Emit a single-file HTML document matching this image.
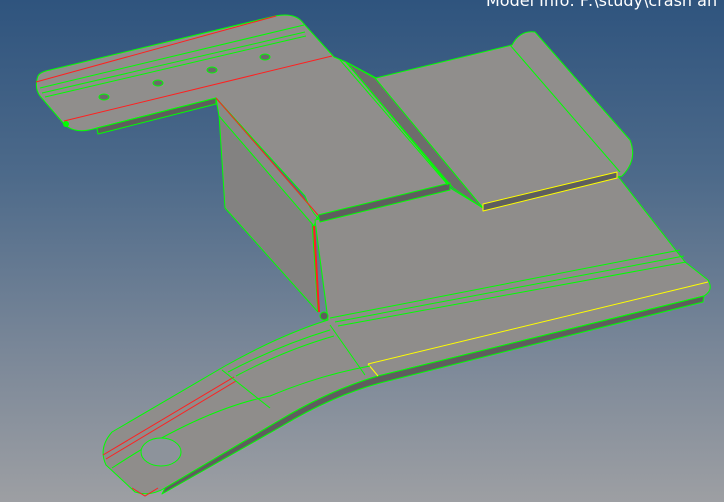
<!DOCTYPE html>
<html><head><meta charset="utf-8"><style>
html,body{margin:0;padding:0;width:724px;height:502px;overflow:hidden}
body{background:linear-gradient(to bottom,#2f547e 0%,#4d6a8a 35%,#7a8798 70%,#9d9fa3 100%)}
svg{position:absolute;left:0;top:0}
.t{position:absolute;left:486px;top:-9px;color:#fff;font:16px "DejaVu Sans","Liberation Sans",sans-serif;white-space:nowrap}
</style></head><body>
<div class="t">Model Info: F:\study\crash an</div>
<svg width="724" height="502" viewBox="0 0 724 502">
<g stroke="#00ff00" stroke-width="1" stroke-linejoin="round">
<!-- left side face of box -->
<polygon points="216,100 219,112 312,222 318,312 225,208 219,114" fill="#838281"/>
<polygon points="216,98 318,215 314,226 219,116" fill="#8a8988"/>
<!-- front face + arm -->
<path d="M315,220 L450,188 L483,208 L617,175 L685,262 L708,280 Q714,290 704,296 L378,376 Q330,390 280,420 L165,488 Q150,497 135,492 L106,465 Q98,448 112,432 L225,366 Q280,335 328,320 Z" fill="#8f8d8b"/>
<!-- lower thickness strips -->
<path d="M704,296 L378,376 Q330,390 280,420 L165,488 L162,494 L282,426 Q332,396 380,383 L703,302 Z" fill="#5e5e5e"/>
<!-- flange + box top -->
<path d="M38,76 Q40,72 50,70 L275,16 Q296,12 304,24 L334,57 L346,62 L450,186 L318,218 Q310,210 305,196 L216,98 L97,128 Q75,135 64,124 L40,96 Q34,88 38,76 Z" fill="#908e8c"/>
<polygon points="97,128 216,98 216,104 98,134" fill="#5e5e5e"/>
<!-- right raised plate -->
<path d="M376,78 L512,45 Q520,30 535,32 L630,140 Q638,160 622,176 L483,208 L453,186 L346,62 Z" fill="#908e8c"/>
<polygon points="346,62 375,78 483,208 453,188" fill="#6e6d6c"/>
<polygon points="483,204 617,172 617,178 483,211" fill="#5e5e5e" stroke="#ffff00"/>
<polygon points="318,215 450,183 450,190 320,222" fill="#5e5e5e"/>
</g>
<!-- detail lines -->
<g fill="none" stroke-width="1">
<path d="M36,82 L276,16" stroke="#ff2020"/>
<path d="M40,88 L304,25 M42,93 L305,32 M45,97 L306,36" stroke="#00ff00"/>
<path d="M64,121 L332,56" stroke="#ff2020"/>
<path d="M216,98 L318,215" stroke="#ff2020"/>
<path d="M314,226 L319,312" stroke="#ff2020" stroke-width="2"/>
<path d="M340,60 L448,185" stroke="#00ff00"/>
<path d="M510,45 L620,172" stroke="#00ff00"/>
<path d="M330,318 L680,250 M335,322 L684,256 M338,326 L686,262" stroke="#00ff00"/>
<path d="M368,364 L708,282" stroke="#ffff00"/>
<path d="M368,364 L378,376" stroke="#ffff00"/>
<path d="M228,372 Q280,345 330,330 M236,376 Q285,350 334,336" stroke="#00ff00"/>
<path d="M103,455 L234,377 M106,459 L236,381" stroke="#ff2020"/>
<path d="M112,468 Q200,410 270,396 Q320,375 370,366" stroke="#00ff00"/>
<path d="M222,370 L270,408 M330,325 L365,375" stroke="#00ff00"/>
<path d="M132,488 L145,496 L158,488" stroke="#ff2020"/>
</g>
<!-- holes -->
<g fill="#6a6a6a" stroke="#00ff00">
<ellipse cx="104" cy="97" rx="5" ry="3"/>
<ellipse cx="158" cy="83" rx="5" ry="3"/>
<ellipse cx="212" cy="70" rx="5" ry="3"/>
<ellipse cx="265" cy="57" rx="5" ry="3"/>
<ellipse cx="161" cy="452" rx="20" ry="14" fill="#8d939b"/>
</g>
<circle cx="66" cy="124" r="3" fill="#00ff00"/>
<circle cx="324" cy="316" r="4" fill="#5e5e5e" stroke="#00ff00"/>
</svg>
</body></html>
